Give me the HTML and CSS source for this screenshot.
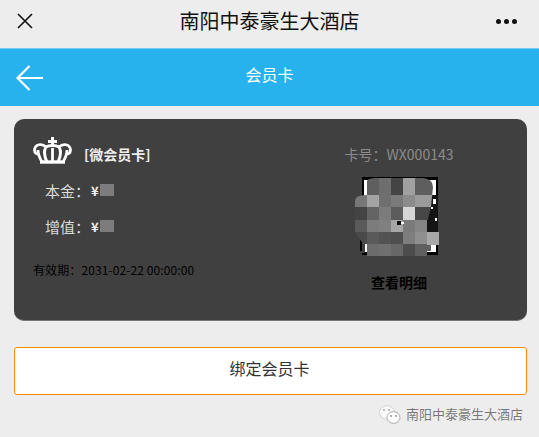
FILE: index.html
```html
<!DOCTYPE html>
<html lang="zh">
<head>
<meta charset="utf-8">
<title>会员卡</title>
<link rel="stylesheet" href="styles.css">
</head>
<body>
<header class="topbar">
  <svg class="close" width="18" height="18" viewBox="0 0 18 18"><path d="M2 2L16 16M16 2L2 16" stroke="#111" stroke-width="1.6" fill="none"/></svg>
  <h1 class="hotel">南阳中泰豪生大酒店</h1>
  <div class="dots"><i></i><i></i><i></i></div>
</header>
<div class="navbar">
  <svg class="back" width="28" height="26" viewBox="0 0 28 26"><path d="M27 13H2M13.500 1L1.500 13L13.500 25" stroke="#fff" stroke-width="2.200" fill="none"/></svg>
  <div class="navtitle">会员卡</div>
</div>
<main class="content">
  <section class="card">
    <div class="left">
      <div class="brand">
        <svg class="crown" width="39" height="27" viewBox="0 0 39 27"><g fill="none" stroke="#fff" stroke-width="2.800"><path d="M9 25C6 20 5 16 5 13"/><path d="M30 25C33 20 34 16 34 13"/><path d="M7 25H32" stroke-width="3.400"/><path d="M14 25C11 19 11 13 13 10C9 6 2 7 1.500 13C1.500 16 4 18 6 16"/><path d="M25 25C28 19 28 13 26 10C30 6 37 7 37.500 13C37.500 16 35 18 33 16"/><path d="M19.500 25V11"/><path d="M13 10C16 8 23 8 26 10"/></g><path d="M18 0H21V3H24V6H21V9H18V6H15V3H18Z" fill="#fff"/></svg>
        <span class="cardname">[微会员卡]</span>
      </div>
      <div class="amount"><span>本金：</span><b>¥</b><i class="blur"></i></div>
      <div class="amount second"><span>增值：</span><b>¥</b><i class="blur"></i></div>
      <div class="expire">有效期：2031-02-22 00:00:00</div>
    </div>
    <div class="right">
      <div class="cardno">卡号：WX000143</div>
      <svg class="qr" width="84" height="79" viewBox="0 0 84 79">
        <defs>
          <clipPath id="mosaic-shape"><path d="M11 18V7Q11 1 20 1L68 1Q78 2 78 10L76 30L72 46V55H84V68Q80 73 72 75V79H12V67H8L0 55V24Q0 18 11 18Z"/></clipPath>
        </defs>
        <rect x="7" y="0" width="76" height="78" fill="#000"/>
        <rect x="9" y="3" width="72" height="72" fill="#fff"/>
        <rect x="72" y="18" width="11" height="40" fill="#151515"/>
        <rect x="78" y="22" width="3" height="5" fill="#fff"/>
        <rect x="80" y="41" width="2" height="3" fill="#fff"/>
        <rect x="76" y="30" width="2" height="2" fill="#fff"/>
        <rect x="2" y="40" width="8" height="36" fill="#404040"/>
        <rect x="5" y="60" width="2" height="14" fill="#000"/>
        <g clip-path="url(#mosaic-shape)" shape-rendering="crispEdges">
          <rect x="12" y="0" width="12" height="18" fill="#5f5f5f"/>
          <rect x="24" y="0" width="12" height="18" fill="#6e6e6e"/>
          <rect x="36" y="0" width="12" height="18" fill="#444"/>
          <rect x="48" y="0" width="12" height="18" fill="#a0a0a0"/>
          <rect x="60" y="0" width="18" height="18" fill="#5e5e5e"/>
          <rect x="0" y="18" width="12" height="12" fill="#777"/>
          <rect x="12" y="18" width="12" height="12" fill="#a3a3a3"/>
          <rect x="24" y="18" width="12" height="12" fill="#6f6f6f"/>
          <rect x="36" y="18" width="12" height="12" fill="#7a7a7a"/>
          <rect x="48" y="18" width="12" height="12" fill="#8b8b8b"/>
          <rect x="60" y="18" width="18" height="12" fill="#9a9a9a"/>
          <rect x="0" y="30" width="12" height="13" fill="#444"/>
          <rect x="12" y="30" width="12" height="13" fill="#646464"/>
          <rect x="24" y="30" width="12" height="13" fill="#7c7c7c"/>
          <rect x="36" y="30" width="12" height="13" fill="#5c5c5c"/>
          <rect x="48" y="30" width="12" height="13" fill="#d5d5d5"/>
          <rect x="60" y="30" width="18" height="13" fill="#474747"/>
          <rect x="0" y="43" width="12" height="12" fill="#5a5a5a"/>
          <rect x="12" y="43" width="12" height="12" fill="#7c7c7c"/>
          <rect x="24" y="43" width="12" height="12" fill="#808080"/>
          <rect x="36" y="43" width="12" height="12" fill="#a6a6a6"/>
          <rect x="48" y="43" width="12" height="12" fill="#7b7b7b"/>
          <rect x="60" y="43" width="12" height="12" fill="#868686"/>
          <rect x="0" y="55" width="12" height="12" fill="#4a4a4a"/>
          <rect x="12" y="55" width="12" height="12" fill="#5a5a5a"/>
          <rect x="24" y="55" width="12" height="12" fill="#535353"/>
          <rect x="36" y="55" width="12" height="12" fill="#4f4f4f"/>
          <rect x="48" y="55" width="12" height="12" fill="#7e7e7e"/>
          <rect x="60" y="55" width="12" height="12" fill="#8f8f8f"/>
          <rect x="72" y="55" width="12" height="13" fill="#a8a8a8"/>
          <rect x="12" y="67" width="12" height="12" fill="#6c6c6c"/>
          <rect x="24" y="67" width="12" height="12" fill="#707070"/>
          <rect x="36" y="67" width="12" height="12" fill="#676767"/>
          <rect x="48" y="67" width="12" height="12" fill="#4d4d4d"/>
          <rect x="60" y="67" width="12" height="12" fill="#606060"/>
          <rect x="72" y="68" width="4" height="6" fill="#606060"/>
        </g>
        <rect x="42" y="44" width="4" height="4" fill="#111"/>
        <rect x="46" y="45" width="3" height="2" fill="#fff"/>
      </svg>
      <div class="detail">查看明细</div>
    </div>
  </section>
  <button class="bind" type="button">绑定会员卡</button>
  <footer class="mark">
    <svg class="wechat" width="22" height="19" viewBox="0 0 22 19"><ellipse cx="8" cy="7.500" rx="7.500" ry="6.800" fill="#f8f8f8" stroke="#c8c8c8" stroke-width=".7"/><ellipse cx="14.500" cy="12.500" rx="6.500" ry="5.800" fill="#fff" stroke="#999" stroke-width=".8"/><circle cx="5" cy="5" r="1" fill="#aaa"/><circle cx="10" cy="5" r="1" fill="#aaa"/><circle cx="12" cy="11" r=".9" fill="#888"/><circle cx="17" cy="11" r=".9" fill="#888"/></svg>
    <span>南阳中泰豪生大酒店</span>
  </footer>
</main>
</body>
</html>
```
FILE: styles.css
```css
* { box-sizing: border-box; }
html, body { margin: 0; height: 100%; }
body {
  width: 539px;
  height: 437px;
  overflow: hidden;
  background: #ededed;
  font-family: "Noto Sans CJK SC", "Noto Sans", sans-serif;
}
.topbar {
  height: 48px;
  display: grid;
  grid-template-columns: 1fr auto 1fr;
  align-items: center;
  padding: 0 22px 7px;
}
.close { display: block; margin-left: -6px; }
.hotel {
  margin: 0;
  font-size: 20px;
  font-weight: 400;
  line-height: 26px;
  color: #111;
}
.dots { display: flex; gap: 3px; justify-self: end; margin-top: 2px; }
.dots i { width: 5px; height: 5px; border-radius: 50%; background: #111; }
.navbar {
  height: 58px;
  background: #27b2ee;
  border-top: 1px solid #6fcbef;
  display: flex;
  align-items: center;
  justify-content: center;
  position: relative;
}
.back { position: absolute; left: 16px; top: 16px; }
.navtitle { color: #fff; font-size: 16px; line-height: 20px; margin-bottom: 8px; }
.content { padding: 13px 12px 0 14px; }
.card {
  height: 202px;
  background: #404040;
  border-radius: 10px;
  border-bottom: 1px solid #777;
  display: flex;
  justify-content: space-between;
  padding: 18px 73px 0 19px;
}
.left { display: flex; flex-direction: column; }
.brand { display: flex; align-items: center; gap: 12px; height: 27px; }
.crown { display: block; }
.cardname { color: #eee; font-size: 14px; font-weight: 700; line-height: 18px; margin-top: 7px; }
.amount {
  display: flex;
  align-items: center;
  margin: 15px 0 0 12px;
  height: 22px;
  color: #ddd;
  font-size: 15px;
}
.amount span { width: 46px; }
.amount b { font-weight: 700; font-size: 13px; color: #eee; width: 9px; }
.blur { width: 14px; height: 12px; background: #7c7c7c; }
.second { margin-top: 14px; }
.expire { margin-top: 24px; color: #000; font-size: 12px; line-height: 17px; letter-spacing: .1px; }
.right { display: flex; flex-direction: column; align-items: center; width: 110px; }
.cardno { color: #8c8c8c; font-size: 14px; line-height: 20px; margin-top: 7px; white-space: nowrap; }
.qr { display: block; margin: 13px 4px 0 0; }
.detail { margin-top: 16px; color: #000; font-size: 14px; font-weight: 700; line-height: 20px; }
.bind {
  display: block;
  width: 513px;
  height: 48px;
  margin-top: 26px;
  padding: 0 2px 7px 0;
  background: #fff;
  border: 1px solid #ff8a00;
  border-radius: 3px;
  color: #333;
  font: 400 16px/20px "Noto Sans CJK SC", "Noto Sans", sans-serif;
}
.mark {
  display: flex;
  align-items: center;
  justify-content: flex-end;
  gap: 5px;
  margin-top: 9px;
  padding-right: 4px;
  height: 20px;
  font-size: 13px;
  line-height: 18px;
}
.wechat { display: block; }
.mark span { color: #777; text-shadow: 0 0 1px #fff; }
```
